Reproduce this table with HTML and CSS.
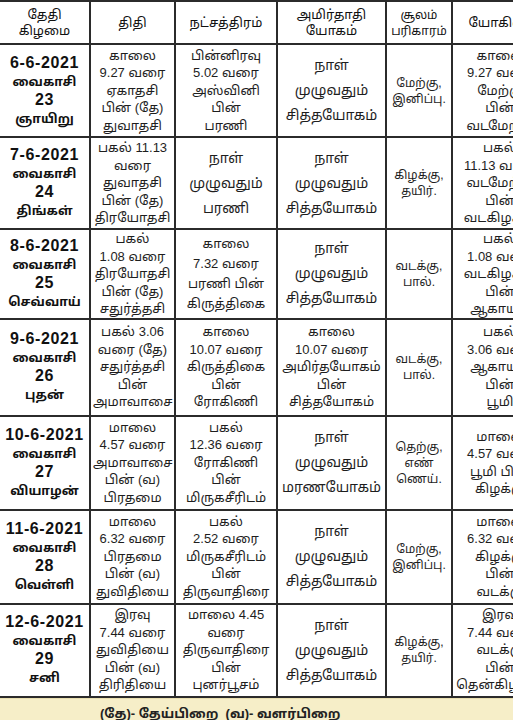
FILE: index.html
```html
<!DOCTYPE html>
<html lang="ta">
<head>
<meta charset="utf-8">
<title>வைகாசி பஞ்சாங்கம்</title>
<link rel="stylesheet" href="styles.css">
</head>
<body>
<div class="sheet">
<table class="cal">
  <colgroup>
    <col class="c1"><col class="c2"><col class="c3"><col class="c4"><col class="c5"><col class="c6">
  </colgroup>
  <thead>
    <tr class="head">
      <th>தேதி<br>கிழமை</th>
      <th>திதி</th>
      <th>நட்சத்திரம்</th>
      <th>அமிர்தாதி<br>யோகம்</th>
      <th class="small">சூலம்<br>பரிகாரம்</th>
      <th>யோகினி</th>
    </tr>
  </thead>
  <tbody>
    <tr class="r1">
      <td class="date">6-6-2021<br><span class="ta">வைகாசி</span><br>23<br><span class="ta">ஞாயிறு</span></td>
      <td class="five">காலை<br>9.27 வரை<br>ஏகாதசி<br>பின் (தே)<br>துவாதசி</td>
      <td class="five">பின்னிரவு<br>5.02 வரை<br>அஸ்வினி<br>பின்<br>பரணி</td>
      <td class="three">நாள்<br>முழுவதும்<br>சித்தயோகம்</td>
      <td class="two">மேற்கு,<br>இனிப்பு.</td>
      <td class="five">காலை<br>9.27 வரை<br>மேற்கு<br>பின்<br>வடமேற்கு</td>
    </tr>
    <tr class="r2">
      <td class="date">7-6-2021<br><span class="ta">வைகாசி</span><br>24<br><span class="ta">திங்கள்</span></td>
      <td class="five">பகல் 11.13<br>வரை<br>துவாதசி<br>பின் (தே)<br>திரயோதசி</td>
      <td class="three">நாள்<br>முழுவதும்<br>பரணி</td>
      <td class="three">நாள்<br>முழுவதும்<br>சித்தயோகம்</td>
      <td class="two">கிழக்கு,<br>தயிர்.</td>
      <td class="five">பகல்<br>11.13 வரை<br>வடமேற்கு<br>பின்<br>வடகிழக்கு</td>
    </tr>
    <tr class="r3">
      <td class="date">8-6-2021<br><span class="ta">வைகாசி</span><br>25<br><span class="ta">செவ்வாய்</span></td>
      <td class="five">பகல்<br>1.08 வரை<br>திரயோதசி<br>பின் (தே)<br>சதுர்த்தசி</td>
      <td class="four">காலை<br>7.32 வரை<br>பரணி பின்<br>கிருத்திகை</td>
      <td class="three">நாள்<br>முழுவதும்<br>சித்தயோகம்</td>
      <td class="two">வடக்கு,<br>பால்.</td>
      <td class="five">பகல்<br>1.08 வரை<br>வடகிழக்கு<br>பின்<br>ஆகாயம்</td>
    </tr>
    <tr class="r4">
      <td class="date">9-6-2021<br><span class="ta">வைகாசி</span><br>26<br><span class="ta">புதன்</span></td>
      <td class="five">பகல் 3.06<br>வரை (தே)<br>சதுர்த்தசி<br>பின்<br>அமாவாசை</td>
      <td class="five">காலை<br>10.07 வரை<br>கிருத்திகை<br>பின்<br>ரோகிணி</td>
      <td class="five">காலை<br>10.07 வரை<br>அமிர்தயோகம்<br>பின்<br>சித்தயோகம்</td>
      <td class="two">வடக்கு,<br>பால்.</td>
      <td class="five">பகல்<br>3.06 வரை<br>ஆகாயம்<br>பின்<br>பூமி</td>
    </tr>
    <tr class="r5">
      <td class="date">10-6-2021<br><span class="ta">வைகாசி</span><br>27<br><span class="ta">வியாழன்</span></td>
      <td class="five">மாலை<br>4.57 வரை<br>அமாவாசை<br>பின் (வ)<br>பிரதமை</td>
      <td class="five">பகல்<br>12.36 வரை<br>ரோகிணி<br>பின்<br>மிருகசீரிடம்</td>
      <td class="three">நாள்<br>முழுவதும்<br>மரணயோகம்</td>
      <td class="two">தெற்கு,<br>எண்<br>ணெய்.</td>
      <td class="five">மாலை<br>4.57 வரை<br>பூமி பின்<br>கிழக்கு</td>
    </tr>
    <tr class="r6">
      <td class="date">11-6-2021<br><span class="ta">வைகாசி</span><br>28<br><span class="ta">வெள்ளி</span></td>
      <td class="five">மாலை<br>6.32 வரை<br>பிரதமை<br>பின் (வ)<br>துவிதியை</td>
      <td class="five">பகல்<br>2.52 வரை<br>மிருகசீரிடம்<br>பின்<br>திருவாதிரை</td>
      <td class="three">நாள்<br>முழுவதும்<br>சித்தயோகம்</td>
      <td class="two">மேற்கு,<br>இனிப்பு.</td>
      <td class="five">மாலை<br>6.32 வரை<br>கிழக்கு<br>பின்<br>வடக்கு</td>
    </tr>
    <tr class="r7">
      <td class="date">12-6-2021<br><span class="ta">வைகாசி</span><br>29<br><span class="ta">சனி</span></td>
      <td class="five">இரவு<br>7.44 வரை<br>துவிதியை<br>பின் (வ)<br>திரிதியை</td>
      <td class="five">மாலை 4.45<br>வரை<br>திருவாதிரை<br>பின்<br>புனர்பூசம்</td>
      <td class="three">நாள்<br>முழுவதும்<br>சித்தயோகம்</td>
      <td class="two">கிழக்கு,<br>தயிர்.</td>
      <td class="five">இரவு<br>7.44 வரை<br>வடக்கு<br>பின்<br>தென்கிழக்கு</td>
    </tr>
  </tbody>
</table>
<div class="legend">(தே)- தேய்பிறை &nbsp;(வ)- வளர்பிறை</div>
</div>
</body>
</html>
```

FILE: styles.css
```css
html, body {
  margin: 0;
  padding: 0;
  background: #ffffff;
  overflow: hidden;
}
body {
  width: 513px;
  height: 720px;
  font-family: "Liberation Sans", "Noto Sans Tamil", "Lohit Tamil", "Noto Sans", sans-serif;
  color: #1e1e1e;
}
.sheet {
  width: 560px;
}
.cal {
  border-collapse: collapse;
  table-layout: fixed;
  width: 548px;
}
.c1 { width: 90px; }
.c2 { width: 85px; }
.c3 { width: 102px; }
.c4 { width: 109px; }
.c5 { width: 66px; }
.c6 { width: 96px; }
.cal th, .cal td {
  border: 2px solid #2b2b2b;
  text-align: center;
  vertical-align: middle;
  padding: 0 2px;
  overflow: hidden;
  white-space: nowrap;
}
.cal th:first-child, .cal td:first-child {
  border-left: none;
}
.head { height: 43px; }
.cal th {
  font-weight: normal;
  font-size: 13px;
  line-height: 16px;
  color: #111;
}
.cal th.small { font-size: 12px; }
.r1 { height: 93px; }
.r2 { height: 92px; }
.r3 { height: 84px; }
.r4 { height: 97px; }
.r5 { height: 94px; }
.r6 { height: 94px; }
.r7 { height: 93px; }
.date {
  font-weight: bold;
  font-size: 16px;
  line-height: 18px;
  letter-spacing: 0.6px;
  color: #111;
}
.date .ta {
  font-size: 12.5px;
  letter-spacing: 0;
}
.five {
  font-size: 13px;
  line-height: 17.5px;
}
.four {
  font-size: 13px;
  line-height: 20px;
}
.three {
  font-size: 14px;
  line-height: 25px;
}
.two {
  font-size: 12px;
  line-height: 16px;
}
.legend {
  height: 30px;
  background: #f6eec8;
  border-top: 1px solid #e9dfb0;
  font-size: 13px;
  font-weight: bold;
  line-height: 30px;
  padding-left: 100px;
  color: #222;
}
```
